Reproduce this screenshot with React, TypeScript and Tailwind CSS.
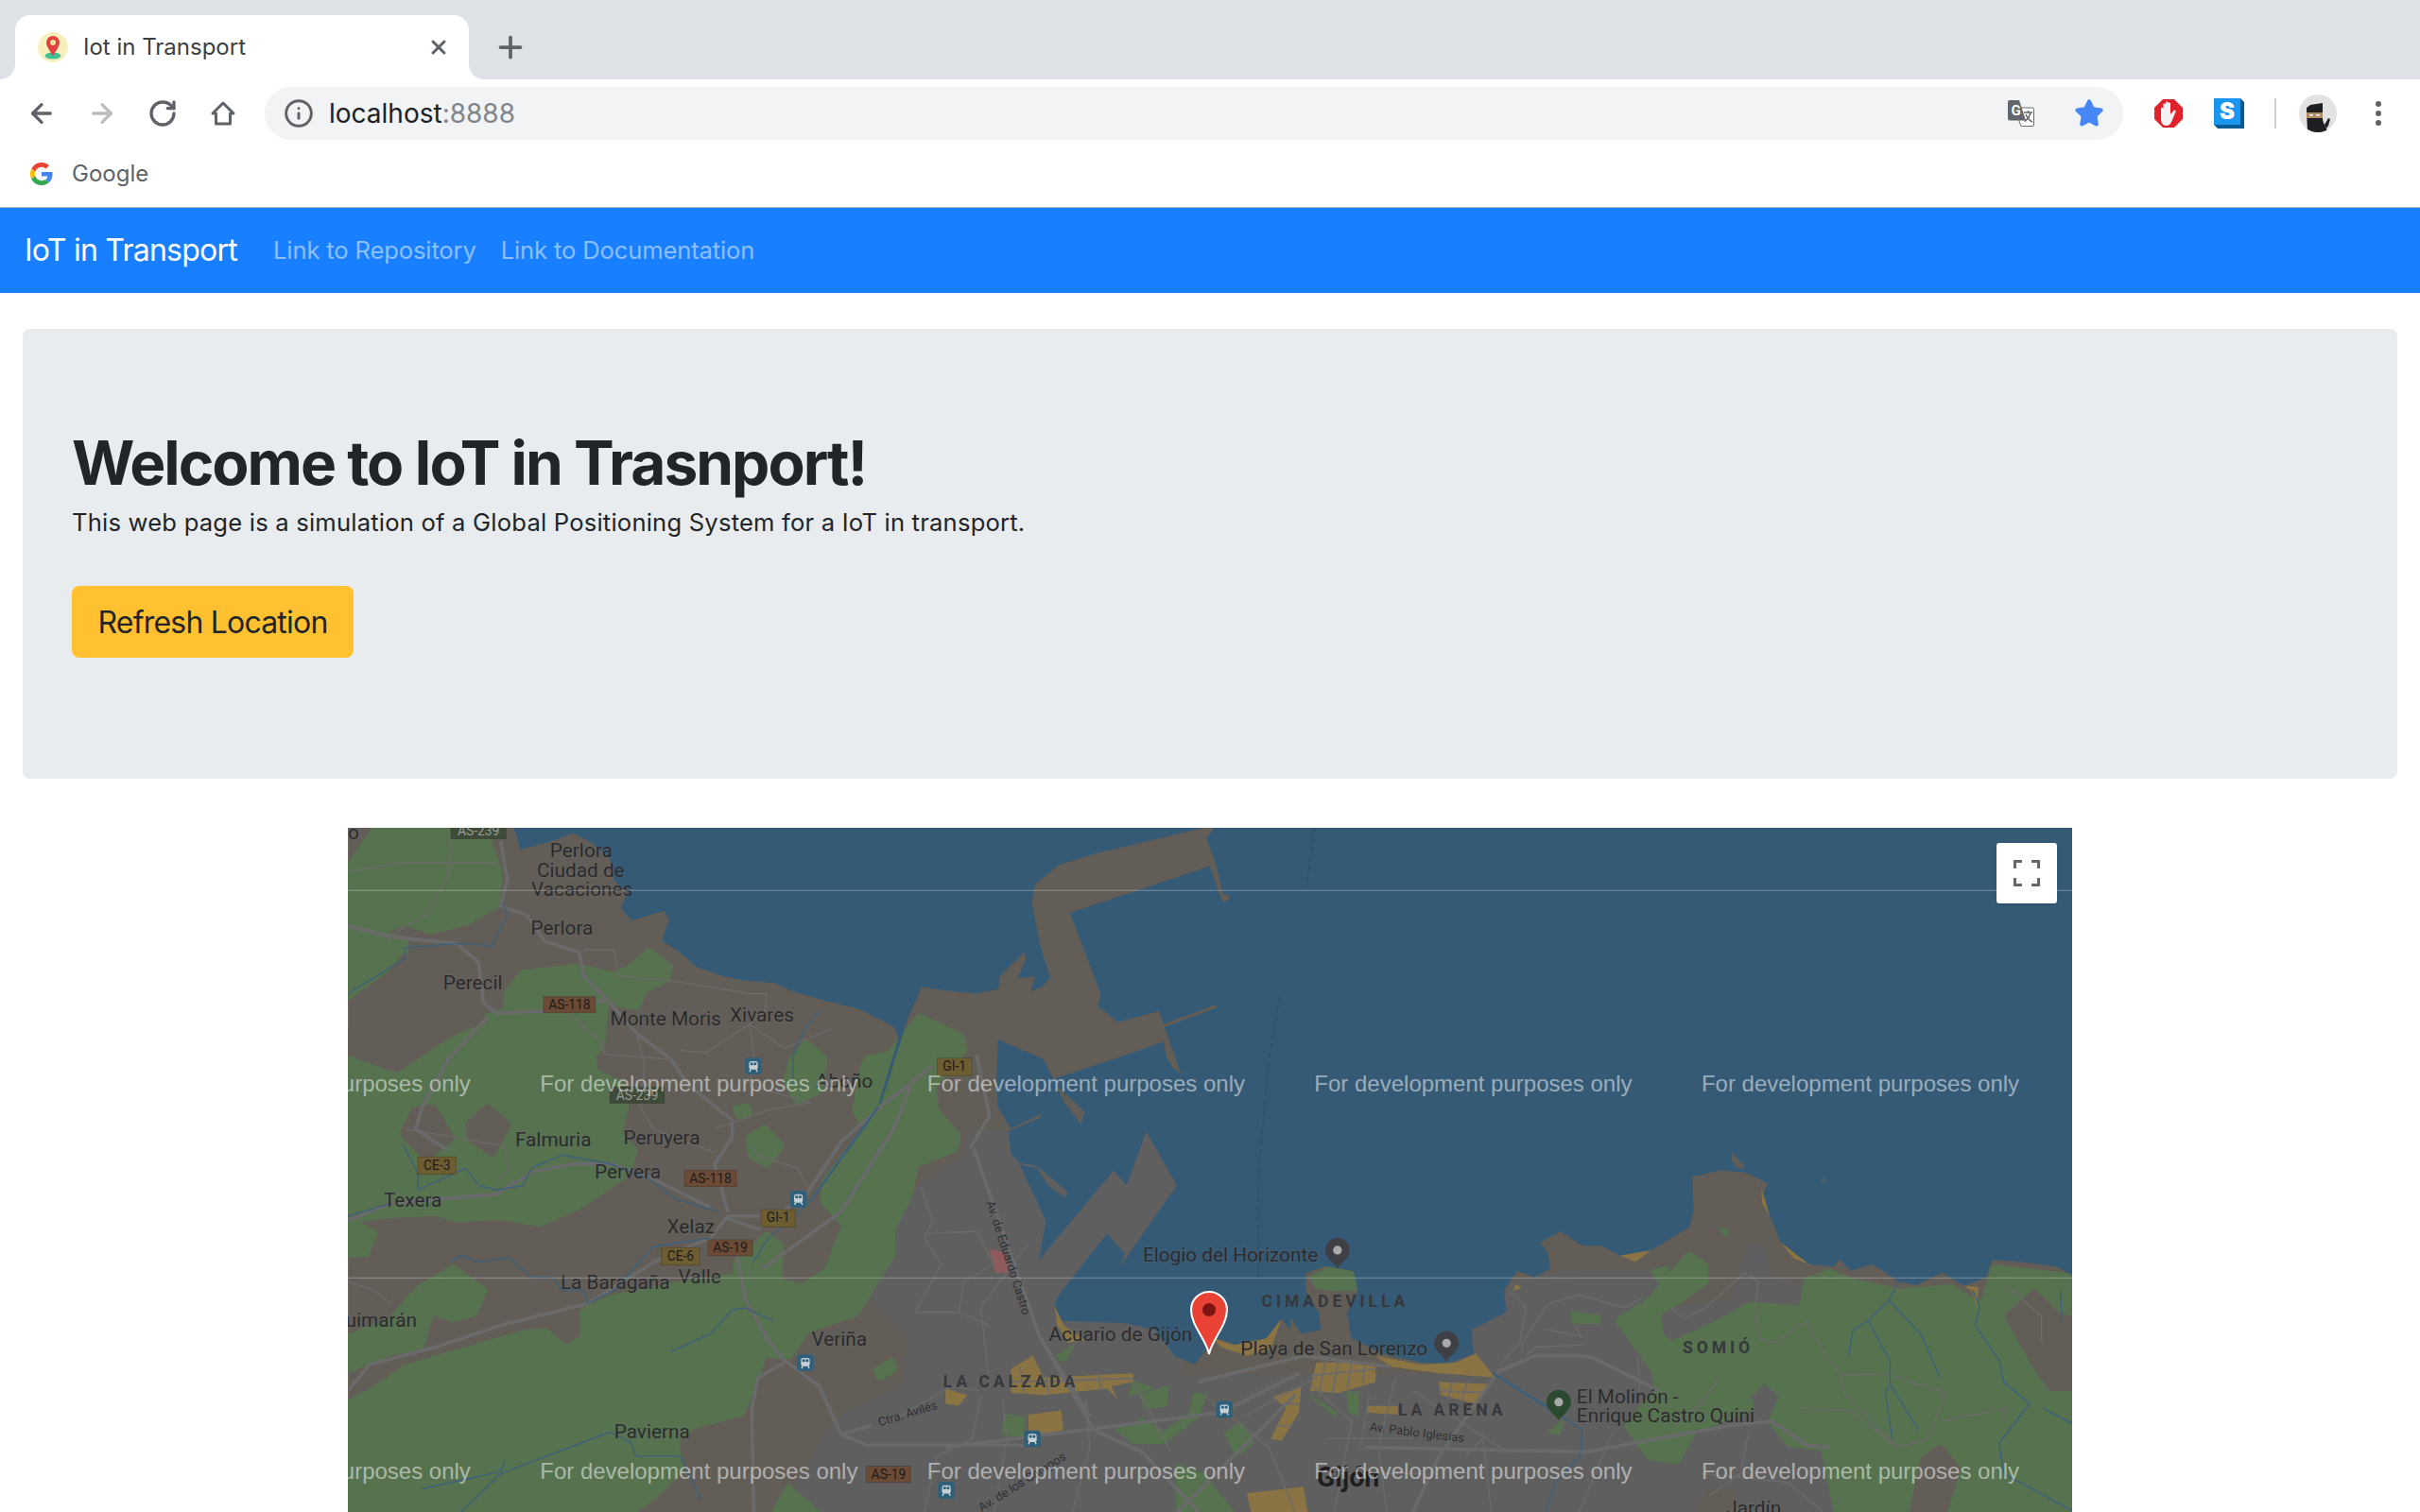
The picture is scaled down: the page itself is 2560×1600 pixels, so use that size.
import React from 'react';
import { ArrowLeft, ArrowRight, Info, Plus, RotateCw, Star, X } from 'lucide-react';

// map shapes are in "zoomed" units: 3950 x 1568 over the 1824 x 724 map
const water =
  '380,0 395,50 470,30 515,12 560,35 600,70 610,120 640,150 625,185 650,212 725,190 735,210 720,260 760,285 800,320 860,340 905,350 975,355 1020,375 1090,395 1170,415 1250,455 1262,480 1215,635 1222,630 1285,430 1315,365 1390,375 1440,380 1490,370 1494,340 1549,285 1554,300 1534,345 1574,340 1564,375 1589,365 1609,345 1584,260 1567,170 1574,130 1629,85 1709,60 1959,0 1984,0 1967,25 1989,85 2004,150 2019,155 2019,165 2004,170 1974,88 1654,195 1679,260 1724,380 1719,410 1764,445 1859,420 1869,450 1989,405 1990,412 1871,457 1909,565 1890,550 1875,525 1869,490 1769,525 1609,578 1687,650 1679,680 1639,625 1594,530 1489,485 1486,600 1489,640 1519,690 1589,655 1584,665 1514,695 1519,745 1539,768 1579,775 1649,835 1644,848 1604,820 1579,780 1539,772 1599,900 1584,990 1754,785 1784,820 1829,695 1899,820 1769,1005 1779,975 1739,930 1629,1070 1619,1095 1634,1130 1779,1135 1849,1150 1894,1210 1939,1230 1989,1170 2049,1190 2104,1170 2139,1125 2159,1150 2159,1120 2184,1160 2229,1150 2224,1110 2194,1060 2194,1020 2239,1005 2304,1015 2314,1060 2289,1110 2299,1170 2369,1205 2459,1225 2519,1228 2579,1205 2574,1150 2654,1110 2649,1060 2679,1015 2719,1030 2754,1010 2749,975 2732,950 2778,925 2828,958 2873,958 2913,980 2953,985 2993,965 3073,915 3083,880 3080,800 3143,785 3203,790 3253,815 3238,850 3258,890 3283,950 3343,1000 3403,1005 3418,990 3443,1015 3493,1000 3553,1040 3593,1048 3653,1020 3703,1050 3753,1030 3768,990 3833,995 3913,1005 3950,1025 3950,0';

const urban =
  '1420,730 1430,750 1300,830 1250,950 1200,1070 1290,1170 1280,1280 1150,1340 1100,1390 1000,1568 3413,1568 3393,1450 3383,1420 3303,1410 3263,1360 3288,1300 3243,1260 3208,1300 3213,1330 3083,1380 3043,1450 2983,1440 2933,1370 3003,1290 2993,1240 2913,1130 2978,1100 3023,1010 2983,1020 2828,1020 2728,1030 2648,1060 2578,1150 2480,1260 1900,1260 1900,820 1829,695 1754,785 1520,700 1430,700';

const urbanEast =
  '3003,1110 3173,1090 3213,960 3243,970 3248,1030 3343,1060 3338,1105 3213,1095 3133,1140 3033,1180';

const greens = [
  '0,95 60,10 80,0 310,0 345,100 340,175 270,215 190,235 130,215 60,240 130,260 130,295 90,320 0,385',
  '365,380 400,335 530,320 610,340 650,320 690,285 735,320 730,345 680,370 660,410 590,395 580,500 560,520 565,560 625,590 635,640 620,700 655,740 640,790 560,845 530,865 440,905 350,890 250,895 200,880 110,885 60,890 0,900 0,510 110,550 230,470 300,440 365,420',
  '0,900 60,930 40,975 0,975',
  '160,1060 240,1010 310,1060 290,1110 240,1125 190,1105 165,1190 100,1200 0,1240 0,1170 100,1130',
  '0,1320 60,1290 130,1240 300,1190 400,1160 450,1155 500,1195 540,1170 540,1110 600,1080 750,1050 880,1030 905,1080 950,1140 950,1210 930,1270 900,1340 790,1370 750,1400 760,1470 700,1530 650,1568 0,1568',
  '1165,650 1175,570 1190,530 1245,520 1215,640 1180,675',
  '1250,510 1310,435 1405,480 1410,510 1340,590 1345,650 1395,705 1390,735 1300,770 1285,840 1245,920 1245,980 1200,1050 1165,1110 1050,1150 1010,1210 950,1205 950,1140 905,1090 890,1000 960,935 990,960 985,1040 1040,1055 1100,1015 1140,910 1090,855 1095,810 1150,740 1220,650',
  '1020,530 1050,495 1090,530 1080,600 1030,625 1005,580',
  '920,710 955,690 990,730 960,770 925,750',
  '890,645 915,640 918,655 895,658',
  '980,1568 1010,1515 1070,1568',
  '1212,1245 1245,1225 1250,1240 1220,1258',
  // Gijon parks
  '2204,1030 2249,1005 2304,1020 2314,1060 2269,1060 2219,1055',
  '1819,1300 1879,1280 1874,1325 1824,1330',
  '1759,1380 1819,1355 1869,1385 1929,1340 1939,1295 1964,1300 1949,1350 1869,1410 1799,1410',
  '2009,1385 2049,1365 2074,1410 2034,1440',
  '1504,1345 1549,1350 1549,1395 1499,1390',
  '2289,1295 2314,1295 2314,1345 2294,1340',
  '2209,1305 2264,1340 2259,1345',
  '1899,1460 1959,1480 2029,1568 1899,1568',
  '1624,1210 1664,1185 1639,1225',
  '1845,1285 1800,1268 1790,1300',
  '2804,1110 2868,1118 2868,1135 2806,1135',
  '2986,1015 3023,1005 3025,1045 3000,1040',
  '3145,915 3165,925 3155,938',
  '2750,1385 2785,1358 2775,1390',
  // east hills
  '2913,1130 2983,1085 3073,980 3108,1005 3108,1040 3053,1080 2998,1110 3008,1170 3033,1185 3133,1140 3213,1095 3333,1105 3343,1040 3393,1020 3443,1040 3553,1065 3673,1055 3728,1090 3748,1090 3773,1010 3950,1030 3950,1568 3413,1568 3383,1420 3303,1410 3263,1360 3288,1300 3243,1260 3208,1300 3213,1330 3083,1380 3043,1450 2983,1440 2933,1370 3003,1290 2993,1240',
];

const landPatches = [
  '3808,1120 3863,1070 3913,1120 3950,1130 3950,1280 3903,1280 3863,1220 3813,1130',
  '3613,1450 3648,1425 3683,1470 3653,1568 3588,1568',
  '0,480 70,380 130,300 280,290 310,380 300,440 230,470 110,550 0,510',
  '155,650 195,645 232,710 180,752 130,700',
  '280,680 320,645 362,680 330,742 285,710',
  '3100,1568 3120,1525 3165,1525 3180,1568',
];

const golds = [
  '1619,1095 1640,1140 1690,1175 1650,1180 1625,1140',
  '1984,1170 2029,1185 2104,1170 2139,1125 2114,1195 2059,1210 1999,1190',
  '2354,1210 2459,1230 2539,1225 2584,1205 2629,1260 2499,1250 2389,1235',
  '2219,1225 2354,1225 2354,1270 2269,1295 2204,1290',
  '2499,1270 2619,1275 2584,1320 2504,1300',
  '1519,1240 1569,1210 1594,1260 1799,1250 1799,1270 1749,1280 1764,1310 1739,1285 1599,1300 1519,1295',
  '1559,1345 1634,1335 1639,1380 1559,1395',
  '2119,1305 2184,1280 2179,1340 2139,1405 2114,1400 2149,1330',
  '2059,1525 2189,1510 2199,1568 2069,1568',
  '1369,1285 1419,1300 1399,1325 1369,1320',
  '2335,1325 2405,1325 2405,1345 2335,1340',
  '2915,980 2985,968 2950,995',
  '3238,825 3258,890 3240,860',
  '3283,950 3350,1002 3310,985',
  '3703,1050 3735,1052 3733,1105 3720,1060',
  '2690,1055 2670,1060 2675,1045',
];

// streets that cut the gold blocks up
const blockStreets = [
  'M2240 1220 L2225 1295 M2270 1220 L2255 1295 M2300 1220 L2290 1285 M2330 1220 L2325 1275 M2205 1255 L2360 1240',
  'M2530 1270 L2520 1310 M2565 1270 L2550 1315 M2500 1290 L2610 1295',
  'M1540 1235 L1550 1300 M1600 1255 L1605 1300 M1660 1255 L1665 1295 M1720 1250 L1725 1290 M1520 1270 L1800 1262',
  'M2140 1320 L2180 1320 M2125 1370 L2165 1370',
];

const thickRoads = [
  'M350 30 L365 120 L350 180 L410 200 L450 260 L530 285 L540 340 L600 400 L660 470 L740 530 L780 590 L880 670 L880 710 L840 770 L870 880',
  'M0 225 L100 250 L250 265 L300 310 L310 400 L340 425 L450 420 L590 395',
  'M320 435 L230 530 L170 640 L155 690 L230 740',
  'M0 1290 L50 1230 L200 1190 L350 1140 L550 1090 L710 990 L830 940 L870 890 L960 890',
  'M0 900 L100 860 L340 840 L420 790 L520 770 L600 770 L690 800 L830 870',
  'M870 895 L940 920 L1050 840 L1130 720 L1220 640 L1340 545',
  'M950 1010 L1130 880 L1250 690 L1290 590',
  'M890 970 L910 1080 L960 1170 L1000 1220 L1080 1280 L1130 1390 L1200 1370',
  'M1000 1225 L940 1260 L925 1330 L930 1568',
  'M1130 1390 L1190 1415 L1568 1415',
  'M1434 735 L1584 1165 L1709 1380 L1819 1430 L1949 1568',
  'M1440 520 L1470 660 L1425 735',
  'M1949 1270 L2189 1210 L2389 1235',
  'M2639 1245 L2719 1210 L2829 1210 L2853 1215 L3003 1290',
  'M1369 1420 L2000 1340 L2180 1250',
  'M1584 1165 L1700 1350',
  'M2640 1240 L2500 1440 L2440 1568',
  'M3163 1370 L3263 1360 L3343 1415 L3393 1420',
  'M2330 1420 L2840 1430 L3163 1370',
  'M2170 1300 L1900 1568',
];

const thinRoads = [
  'M240 0 L230 110 L180 200 L130 225 L90 260',
  'M0 100 L120 80 L340 80',
  'M540 280 L610 280 L620 340 L740 350 L920 380 L960 380 L955 420 L920 450 L930 520 L920 590',
  'M760 510 L820 515 L920 450 L1000 505 L1110 460',
  'M660 470 L680 540 L670 640 L700 690 L840 745',
  'M500 420 L580 490 L590 520 L740 530',
  'M840 690 L970 645 L1060 630 L990 610 L920 590',
  'M925 730 L940 750 L1030 780 L1050 820',
  'M130 690 L250 710 L360 730 L370 780 L340 810',
  'M0 1040 L60 1060 L100 1090',
  'M1230 1370 L1380 1280 L1445 1290',
  'M1310 820 L1340 900 L1320 940 L1360 1000 L1300 1110 L1400 1110 L1470 1140',
  'M1320 930 L1440 925 L1480 1000 L1410 1040 L1400 1110',
  'M1560 950 L1450 1100 L1470 1280',
  'M1450 1300 L1430 1400 L1350 1440 L1320 1568',
  'M1500 1310 L1510 1400 L1480 1568',
  'M1690 1310 L1700 1420 L1660 1568',
  'M1800 1270 L1880 1420',
  'M1960 1300 L2110 1420 L2170 1568',
  'M2050 1350 L2220 1260',
  'M2210 1280 L2300 1360 L2260 1568',
  'M2340 1300 L2320 1420',
  'M2400 1260 L2360 1420 L2380 1568',
  'M2440 1290 L2640 1420',
  'M2560 1440 L2600 1400 L2620 1568',
  'M2240 1400 L2440 1400',
  'M2260 1480 L2460 1480',
  'M2660 1060 L2700 1100 L2685 1180 L2640 1230',
  'M2750 1090 L2690 1180 L2690 1205',
  'M2750 1090 L2820 1070 L2925 1100 L2960 1080',
  'M2810 1140 L2825 1165 L2745 1150',
  'M2830 1185 L2720 1190 L2700 1210',
  'M2955 1210 L2960 1290',
  'M3030 1100 L3063 1125 L3110 1100 L3200 1020 L3230 1040 L3225 1100 L3233 1170 L3270 1180 L3340 1130 L3380 1200 L3420 1255',
  'M3420 1255 L3520 1250 L3660 1295 L3620 1400 L3550 1420 L3430 1300 L3420 1255',
  'M3320 1330 L3440 1335 L3550 1420',
  'M3140 1260 L3110 1310 L3040 1370',
  'M3210 1380 L3190 1480 L3120 1530',
  'M3650 1360 L3800 1330 L3790 1360',
  'M2900 1380 L2820 1568',
  'M3800 1050 L3880 1120 L3880 1180',
  'M3100 1480 L3300 1500 L3380 1568',
];

const rivers = [
  'M0 380 L130 300 L130 275 L250 265 L330 270 L365 200 L355 170',
  'M125 725 L160 790 L160 830 L270 780 L300 820 L340 830 L400 820 L420 780 L490 750 L600 770 L690 805 L750 850 L850 880',
  'M1215 640 L1060 855 L960 945 L925 1000',
  'M1080 420 L1050 455 L1020 520 L1020 590',
  'M235 995 L260 980 L300 995 L370 985 L420 1030 L470 1030 L490 1060 L540 1060 L550 1090 L610 1060 L700 960 L830 940',
  'M740 1200 L830 1160 L880 1105 L910 1100 L975 1130',
  'M170 1515 L350 1475 L360 1450',
  'M260 1568 L350 1480 L600 1385 L650 1410 L660 1440 L760 1440 L810 1540',
  'M0 890 L100 860',
  'M3553 1040 L3533 1080 L3483 1130 L3448 1150 L3438 1210',
  'M3483 1130 L3533 1220 L3533 1275 L3598 1380',
  'M3528 1280 L3523 1300 L3538 1400',
  'M3528 1080 L3603 1160 L3648 1260',
  'M3723 1060 L3738 1100 L3728 1140 L3783 1220 L3793 1270 L3853 1320 L3783 1410 L3793 1480 L3950 1565',
  'M3883 1330 L3950 1365',
  'M3923 1060 L3928 1140',
  'M2623 1250 L2743 1325 L2828 1380 L2823 1440 L2768 1500 L2743 1568',
];

const shields: [number, number, number, string, string][] = [
  [236, -12, 126, 'AS-239', 'bg-dark'],
  [448, 387, 119, 'AS-118', 'brown'],
  [600, 594, 125, 'AS-239', 'bg-dark'],
  [160, 754, 88, 'CE-3', 'olive'],
  [771, 785, 119, 'AS-118', 'brown'],
  [946, 875, 79, 'GI-1', 'olive'],
  [718, 962, 88, 'CE-6', 'olive'],
  [825, 944, 102, 'AS-19', 'brown'],
  [1350, 528, 79, 'GI-1', 'olive'],
  [1188, 1463, 101, 'AS-19', 'brown'],
];

const labels: [string, number, number][] = [
  ['o', 0, 25],
  ['Perlora', 463, 67],
  ['Ciudad de', 433, 112],
  ['Vacaciones', 420, 157],
  ['Perlora', 419, 245],
  ['Perecil', 218, 370],
  ['Monte Moris', 601, 452],
  ['Xivares', 875, 443],
  ['Aboño', 1072, 596],
  ['Falmuria', 383, 730],
  ['Peruyera', 631, 725],
  ['Pervera', 565, 803],
  ['Texera', 82, 868],
  ['Xelaz', 731, 930],
  ['Valle', 757, 1044],
  ['La Baragaña', 487, 1056],
  ['Guimarán', -36, 1143],
  ['Veriña', 1062, 1186],
  ['Pavierna', 610, 1399],
  ['Elogio del Horizonte', 1821, 995],
  ['Acuario de Gijón', 1606, 1177],
  ['Playa de San Lorenzo', 2045, 1208],
  ['El Molinón -', 2815, 1318],
  ['Enrique Castro Quini', 2815, 1363],
  ['Jardín', 3158, 1575],
];

const districts: [string, number, number][] = [
  ['CIMADEVILLA', 2093, 1098],
  ['LA CALZADA', 1364, 1282],
  ['LA ARENA', 2406, 1347],
  ['SOMIÓ', 3058, 1205],
];

const roadNames: [string, number, number, number][] = [
  ['Ctra. Avilés', 1218, 1372, -17],
  ['Av. Pablo Iglesias', 2340, 1382, 7],
  ['Av. de los Campos', 1452, 1568, -32],
  ['Av. de Eduardo Castro', 1462, 858, 72],
];

const transit = [
  [910, 527],
  [1013, 832],
  [1029, 1207],
  [1352, 1499],
  [1549, 1381],
  [1989, 1314],
];

const shieldColors: Record<string, string> = {
  'bg-dark': '#3d4b38',
  brown: '#6b4b35',
  olive: '#6e5d30',
};

const MapDrawing = () => (
  <svg viewBox="0 0 3950 1568" className="block w-full h-full font-['Roboto',sans-serif]">
    <rect width="3950" height="1568" fill="#625e57" />
    <polygon points={urban} fill="#5f5f60" stroke="#5f5f60" strokeWidth="16" strokeLinejoin="round" />
    <polygon points={urbanEast} fill="#5f5f60" stroke="#5f5f60" strokeWidth="16" strokeLinejoin="round" />
    {greens.map((p, i) => (
      <polygon key={i} points={p} fill="#56724f" strokeLinejoin="round" stroke="#56724f" strokeWidth={i < 12 || i === greens.length - 1 ? 18 : 4} />
    ))}
    {landPatches.map((p, i) => (
      <polygon key={i} points={p} fill="#625e57" stroke="#625e57" strokeWidth="22" strokeLinejoin="round" />
    ))}
    <polygon points={water} fill="#355a75" />
    <polygon points="3170,745 3195,770 3200,782 3180,778 3170,760" fill="#625e57" />
    <polygon points="3375,810 3383,802 3384,812" fill="#625e57" />
    <polygon points="1469,965 1509,975 1514,1020 1484,1020" fill="#8f5a5a" />
    {golds.map((p, i) => (
      <polygon key={i} points={p} fill="#8b7443" />
    ))}
    {blockStreets.map((d, i) => (
      <path key={i} d={d} fill="none" stroke="#6c6b6a" strokeWidth="4" />
    ))}
    <path d="M2215 0 L2195 140 M2135 385 L2110 530 L2085 800 L2085 1030" fill="none" stroke="#2f5069" strokeWidth="3" strokeDasharray="14 8" />
    {thinRoads.map((d, i) => (
      <path key={i} d={d} fill="none" stroke="#6c6b6a" strokeWidth="3" />
    ))}
    {thickRoads.map((d, i) => (
      <path key={i} d={d} fill="none" stroke="#6a6a6b" strokeWidth="8" strokeLinejoin="round" />
    ))}
    {rivers.map((d, i) => (
      <path key={i} d={d} fill="none" stroke="#3c607b" strokeWidth="3" strokeLinejoin="round" />
    ))}
    <path d="M1215 640 L1060 855" fill="none" stroke="#3c607b" strokeWidth="5" />
    <path d="M2623 1250 L2743 1325" fill="none" stroke="#3c607b" strokeWidth="6" />

    {shields.map(([x, y, w, name, tone]) => (
      <g key={x + name}>
        <rect x={x} y={y} width={w} height={tone === 'olive' ? 40 : 37} fill={shieldColors[tone]} stroke="#00000030" strokeWidth="2" />
        <text x={x + w / 2} y={y + 29} textAnchor="middle" fontSize="30" fill={tone === 'bg-dark' ? '#9a9a9a' : '#1c1c1c'}>
          {name}
        </text>
      </g>
    ))}

    {transit.map(([x, y]) => (
      <g key={x} transform={`translate(${x} ${y})`}>
        <rect width="38" height="38" rx="6" fill="#2e607c" />
        <rect x="9" y="8" width="20" height="19" rx="5" fill="#c9d0d4" />
        <rect x="12" y="11" width="6" height="6" fill="#2e607c" />
        <rect x="20" y="11" width="6" height="6" fill="#2e607c" />
        <path d="M13 26 L10 32 M25 26 L28 32" stroke="#c9d0d4" strokeWidth="3" />
      </g>
    ))}

    {labels.map(([name, x, y]) => (
      <text key={name + y} x={x} y={y} fontSize="45" fill="#2a2a2c" stroke="#77777766" strokeWidth="2" paintOrder="stroke">
        {name}
      </text>
    ))}
    {districts.map(([name, x, y]) => (
      <text key={name} x={x} y={y} fontSize="38" fontWeight="700" letterSpacing="8.500" fill="#37383b">
        {name}
      </text>
    ))}
    <text x="2219" y="1510" fontSize="62" fontWeight="700" fill="#1f1f21">
      Gijón
    </text>
    {roadNames.map(([name, x, y, angle]) => (
      <text key={name} transform={`translate(${x} ${y}) rotate(${angle})`} fontSize="28" fill="#2f3033">
        {name}
      </text>
    ))}

    {[
      [2267, 972, '#3e4046'],
      [2517, 1185, '#3e4046'],
      [2774, 1320, '#2b4a2f'],
    ].map(([x, y, fill]) => (
      <g key={x as number} transform={`translate(${x} ${y})`}>
        <path d="M0 38 C-6 26 -28 16 -28 -4 A28 28 0 0 1 28 -4 C28 16 6 26 0 38 Z" fill={fill as string} />
        <circle cx="0" cy="-4" r="10" fill="#a9a9a9" />
      </g>
    ))}

    {[605, 1493].map((y) =>
      [-447, 440, 1327, 2214, 3101].map((x) => (
        <text key={`${x}-${y}`} x={x} y={y} fontSize="52" fill="#ffffff" fillOpacity="0.5" className="font-['Liberation_Sans',sans-serif]">
          For development purposes only
        </text>
      ))
    )}
    <path d="M0 143.500 H3950 M0 1031.500 H3950" stroke="#ffffff" strokeOpacity="0.35" strokeWidth="2" />
  </svg>
);

const Favicon = () => (
  <svg viewBox="0 0 32 32" className="w-8 h-8 shrink-0">
    <circle cx="16" cy="16" r="16" fill="#f7f0bd" />
    <ellipse cx="16" cy="25" rx="8.500" ry="3.500" fill="#3fbf94" />
    <path d="M16 25 C13 20 9 15 9 11 A7 7 0 0 1 23 11 C23 15 19 20 16 25 Z" fill="#e2413f" />
    <circle cx="16" cy="11" r="3" fill="#f7dfa0" />
  </svg>
);

const GoogleG = () => (
  <svg viewBox="0 0 48 48" className="w-6 h-6 shrink-0">
    <path fill="#EA4335" d="M24 9.5c3.5 0 6.7 1.2 9.2 3.6l6.9-6.9C35.9 2.4 30.5 0 24 0 14.6 0 6.5 5.4 2.6 13.2l8 6.2C12.4 13.7 17.7 9.5 24 9.5z" />
    <path fill="#4285F4" d="M47 24.5c0-1.6-.1-3.1-.4-4.5H24v9h12.9c-.6 3-2.2 5.500-4.800 7.200l7.700 6C44.300 38.600 47 32.100 47 24.500z" />
    <path fill="#FBBC05" d="M10.500 28.600c-.5-1.400-.8-3-.8-4.600s.3-3.200.8-4.600l-8-6.200C.9 16.500 0 20.100 0 24s.9 7.500 2.600 10.800l7.900-6.200z" />
    <path fill="#34A853" d="M24 48c6.500 0 11.900-2.100 15.800-5.800l-7.700-6c-2.100 1.400-4.900 2.300-8.100 2.300-6.300 0-11.600-4.200-13.500-9.900l-7.900 6.200C6.500 42.600 14.600 48 24 48z" />
  </svg>
);

const HomeIcon = () => (
  <svg viewBox="0 0 32 32" className="w-8 h-8" fill="none" stroke="#5f6368" strokeWidth="3" strokeLinejoin="round">
    <path d="M16 5 L27 16 H23.500 V27 H8.500 V16 H5 Z" />
  </svg>
);

const TranslateIcon = () => (
  <svg viewBox="0 0 28 28" className="w-7 h-7 shrink-0">
    <path d="M12 8 H26 A1.500 1.500 0 0 1 27.500 9.500 V26 A1.500 1.500 0 0 1 26 27.500 H14 L12 22 Z" fill="#fff" stroke="#6a6d71" strokeWidth="1" />
    <path d="M2 0 H12 L19 21.500 H2 A2 2 0 0 1 0 19.500 V2 A2 2 0 0 1 2 0 Z" fill="#63666a" />
    <text x="8.500" y="16" textAnchor="middle" fontSize="15" fontWeight="700" fill="#fff" fontFamily="Roboto, sans-serif">
      G
    </text>
    <path d="M17 13 H26 M21.500 11 V13 M24 13 C23 18 20 21 17.500 22.500 M19 15 C20.500 19 23 21.500 26 23" fill="none" stroke="#63666a" strokeWidth="1.500" />
  </svg>
);

const AdBlock = () => (
  <svg viewBox="0 0 32 32" className="w-8 h-8">
    <polygon points="10,1 22,1 31,10 31,22 22,31 10,31 1,22 1,10" fill="#e0222a" />
    <path d="M8 11 C8 9.500 10.500 9.500 10.500 11 V6.500 C10.500 5 13 5 13 6.500 V4.500 C13 3 15.500 3 15.500 4.500 V5.500 C15.500 4.300 18 4.300 18 5.500 V17 L21.500 13 C22.500 11.800 24.500 13 23.500 14.500 L19.500 24 C18.500 27 16.500 29 13.500 29 C10 29 8 26 8 22 Z" fill="#f3f1f1" />
  </svg>
);

const SExtension = () => (
  <svg viewBox="0 0 32 32" className="w-8 h-8">
    <polygon points="0,0 28,0 32,4 32,32 4,32 0,28" fill="#0b5a94" />
    <rect width="28" height="28" fill="#1a96f0" />
    <text x="14" y="22" textAnchor="middle" fontSize="24" fontWeight="900" fill="#fff" fontFamily="Inter, sans-serif">
      S
    </text>
  </svg>
);

const Avatar = () => (
  <svg viewBox="0 0 40 40" className="w-10 h-10 rounded-full">
    <rect width="40" height="40" fill="#e2e2e2" />
    <path d="M8 14 L12 11 L25 9 V26 C25 30 30 36 30 40 H9 C9 34 8 24 8 14 Z" fill="#1d1f22" />
    <rect x="8" y="19" width="17" height="6" fill="#b08a62" />
    <rect x="11" y="21" width="4" height="1.500" fill="#fff" />
    <rect x="18" y="21" width="4" height="1.500" fill="#fff" />
    <path d="M27 32 L31 25 L33 26 L31 33 L29 36 Z" fill="#1d1f22" />
  </svg>
);

const BrowserChrome = () => (
  <header className="font-['Inter',sans-serif]">
    <div className="h-[84px] bg-[#dee1e6] pt-4 pl-4 flex items-start">
      <div className="relative w-[480px] h-[68px] bg-white rounded-t-2xl flex items-center pl-6 pr-5">
        <div className="absolute bottom-0 -left-4 w-4 h-4 bg-white">
          <div className="w-full h-full bg-[#dee1e6] rounded-br-2xl"></div>
        </div>
        <div className="absolute bottom-0 -right-4 w-4 h-4 bg-white">
          <div className="w-full h-full bg-[#dee1e6] rounded-bl-2xl"></div>
        </div>
        <Favicon />
        <span className="ml-[16px] text-[24px] text-[#3c4043] flex-1">Iot in Transport</span>
        <X className="w-6 h-6 text-[#5f6368]" strokeWidth={3} />
      </div>
      <div className="ml-[26px] h-[68px] flex items-center">
        <Plus className="w-9 h-9 text-[#5f6368]" strokeWidth={2.5} />
      </div>
    </div>

    <div className="h-[72px] bg-white flex items-center px-3">
      <div className="w-16 flex justify-center">
        <ArrowLeft className="w-8 h-8 text-[#5f6368]" strokeWidth={2.5} />
      </div>
      <div className="w-16 flex justify-center">
        <ArrowRight className="w-8 h-8 text-[#bcbdbf]" strokeWidth={2.5} />
      </div>
      <div className="w-16 flex justify-center">
        <RotateCw className="w-8 h-8 text-[#5f6368]" strokeWidth={2.5} />
      </div>
      <div className="w-16 flex justify-center">
        <HomeIcon />
      </div>
      <div className="ml-3 flex-1 h-14 bg-[#f1f3f4] rounded-full flex items-center pl-5 pr-5">
        <Info className="w-8 h-8 text-[#5f6368]" strokeWidth={2.2} />
        <span className="ml-[16px] flex-1 text-[28px] text-[#202124]">
          localhost<span className="text-[#80868b]">:8888</span>
        </span>
        <TranslateIcon />
        <Star className="ml-[42px] w-8 h-8 text-[#4787f5] fill-[#4787f5]" />
      </div>
      <div className="ml-4 w-16 flex justify-center">
        <AdBlock />
      </div>
      <div className="w-16 flex justify-center">
        <SExtension />
      </div>
      <div className="ml-4 w-0.5 h-8 bg-[#cfcfcf]"></div>
      <div className="ml-3 w-16 flex justify-center">
        <Avatar />
      </div>
      <div className="w-16 flex flex-col items-center gap-1">
        <div className="w-1.5 h-1.5 rounded-full bg-[#5f6368]"></div>
        <div className="w-1.5 h-1.5 rounded-full bg-[#5f6368]"></div>
        <div className="w-1.5 h-1.5 rounded-full bg-[#5f6368]"></div>
      </div>
    </div>

    <div className="h-16 bg-white border-b border-[#b4b4b4] pb-[7px] pl-8 flex items-center">
      <GoogleG />
      <span className="ml-[20px] text-[24px] text-[#5f6368]">Google</span>
    </div>
  </header>
);

const App = () => {
  return (
    <div className="w-[2560px] h-[1600px] overflow-hidden bg-white font-['Inter',sans-serif]">
      <BrowserChrome />

      <nav className="h-[90px] bg-[#187fff] flex items-center pl-[26px]">
        <span className="text-[32px] tracking-[-0.75px] text-white">IoT in Transport</span>
        <a className="ml-[38px] text-[25.6px] tracking-[-0.15px] text-white/50">Link to Repository</a>
        <a className="ml-[26px] text-[25.6px] tracking-[-0.15px] text-white/50">Link to Documentation</a>
      </nav>

      <section className="mx-6 mt-[38px] h-[476px] bg-[#e9ecef] rounded-lg px-[52px] pt-[103px]">
        <h1 className="text-[64px] leading-[77px] font-bold tracking-[-2px] text-[#212529]">Welcome to IoT in Trasnport!</h1>
        <p className="mt-[6px] text-[25.6px] leading-[38px] tracking-[0.2px] text-[#212529]">
          This web page is a simulation of a Global Positioning System for a IoT in transport.
        </p>
        <button className="mt-[48px] w-[298px] h-[76px] pt-0.5 bg-[#ffc12f] rounded-lg text-[32px] tracking-[-0.8px] text-[#212529]">
          Refresh Location
        </button>
      </section>

      <div className="relative mt-[52px] mx-auto w-[1824px] h-[724px] overflow-hidden">
        <MapDrawing />
        <div className="absolute top-4 right-4 w-16 h-16 bg-white rounded-[3px] shadow flex items-center justify-center">
          <svg viewBox="0 0 28 28" className="w-7 h-7" fill="none" stroke="#666666" strokeWidth="3">
            <path d="M1.500 9 V1.500 H9 M19 1.500 H26.500 V9 M26.500 19 V26.500 H19 M9 26.500 H1.500 V19" />
          </svg>
        </div>
        <svg viewBox="0 0 42 70" className="absolute left-[890px] top-[489px] w-[42px] h-[70px]">
          <path d="M21 68 C18 52 2 38 2 21 A19 19 0 0 1 40 21 C40 38 24 52 21 68 Z" fill="#ea4335" stroke="#ffffff" strokeWidth="2" />
          <circle cx="21" cy="21" r="7" fill="#7f1414" />
        </svg>
      </div>
    </div>
  );
};

export default App;
